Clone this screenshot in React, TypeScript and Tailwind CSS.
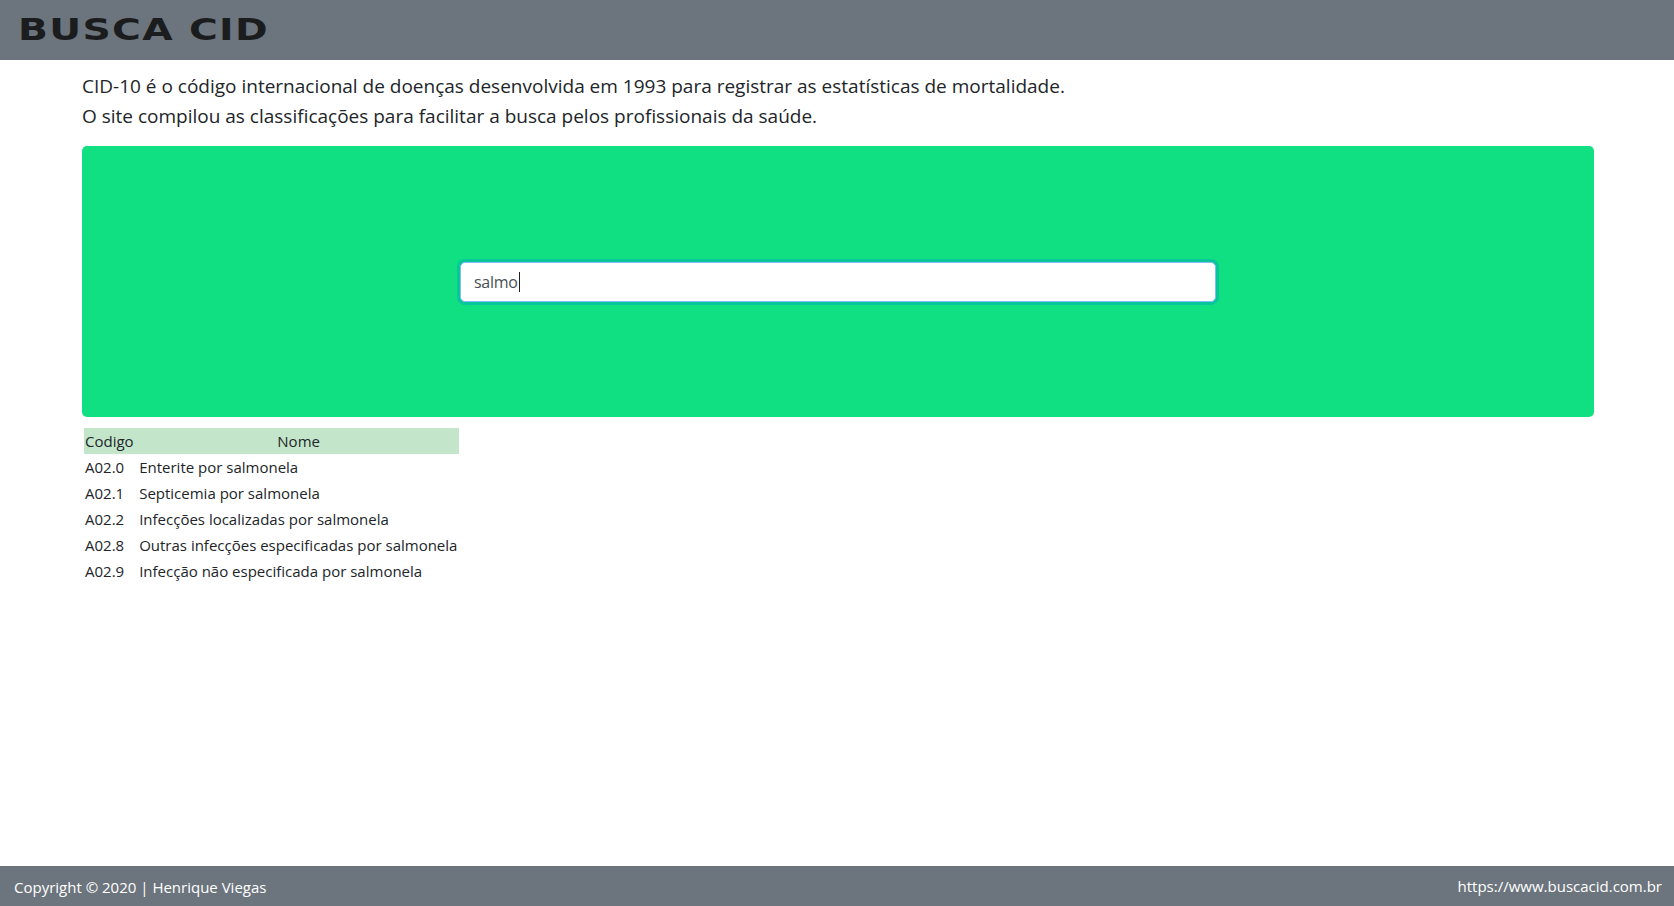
import React from "react";

const rows = [
  ["A02.0", "Enterite por salmonela"],
  ["A02.1", "Septicemia por salmonela"],
  ["A02.2", "Infecções localizadas por salmonela"],
  ["A02.8", "Outras infecções especificadas por salmonela"],
  ["A02.9", "Infecção não especificada por salmonela"],
];

export default function App() {
  return (
    <div className="flex min-h-[906px] flex-col bg-white text-[#212529]" style={{ fontFamily: "'Open Sans', 'Noto Sans', sans-serif" }}>
      <header className="flex h-[60px] items-center bg-[#6c757d] pl-[18px]">
        <span
          className="origin-left scale-x-[1.31] text-[30px] font-bold leading-none tracking-[1px] text-[#1b1c1e]"
          style={{ fontFamily: "'DejaVu Sans', sans-serif" }}
        >
          BUSCA CID
        </span>
      </header>
      <main className="flex-1 pl-[82px] pr-[80px] pt-[11px]">
        <p className="text-[19px] leading-[30px]">
          CID-10 é o código internacional de doenças desenvolvida em 1993 para registrar as estatísticas de mortalidade.
        </p>
        <p className="text-[19px] leading-[30px]">
          O site compilou as classificações para facilitar a busca pelos profissionais da saúde.
        </p>
        <div className="mt-[15px] flex h-[271px] items-center justify-center rounded-[5px] bg-[#10e082]">
          <div className="flex h-[40px] w-[756px] items-center rounded-[5px] border border-[#80bdff] bg-white px-[13px] shadow-[0_0_0_3px_rgba(0,160,190,0.4)]">
            <span className="text-[16px] tracking-[-0.3px] text-[#495057]">salmo</span>
            <span className="ml-px h-[20px] w-px bg-[#222]" />
          </div>
        </div>
        <table className="mt-[11px] ml-[2px] border-collapse text-[15px]">
          <thead>
            <tr className="h-[26px] bg-[#c3e6cb]">
              <th className="px-[1px] text-left font-normal">Codigo</th>
              <th className="w-[321px] px-[1px] text-center font-normal">Nome</th>
            </tr>
          </thead>
          <tbody>
            {rows.map(([c, n]) => (
              <tr key={c} className="h-[26px]">
                <td className="pr-[14px] pl-[1px]">{c}</td>
                <td className="px-[1px] whitespace-nowrap">{n}</td>
              </tr>
            ))}
          </tbody>
        </table>
      </main>
      <footer className="flex h-[40px] items-center justify-between bg-[#6c757d] pl-[14px] pr-[12px] text-[15px] text-white">
        <span className="pt-[3px]">Copyright © 2020 | Henrique Viegas</span>
        <span>https://www.buscacid.com.br</span>
      </footer>
    </div>
  );
}
